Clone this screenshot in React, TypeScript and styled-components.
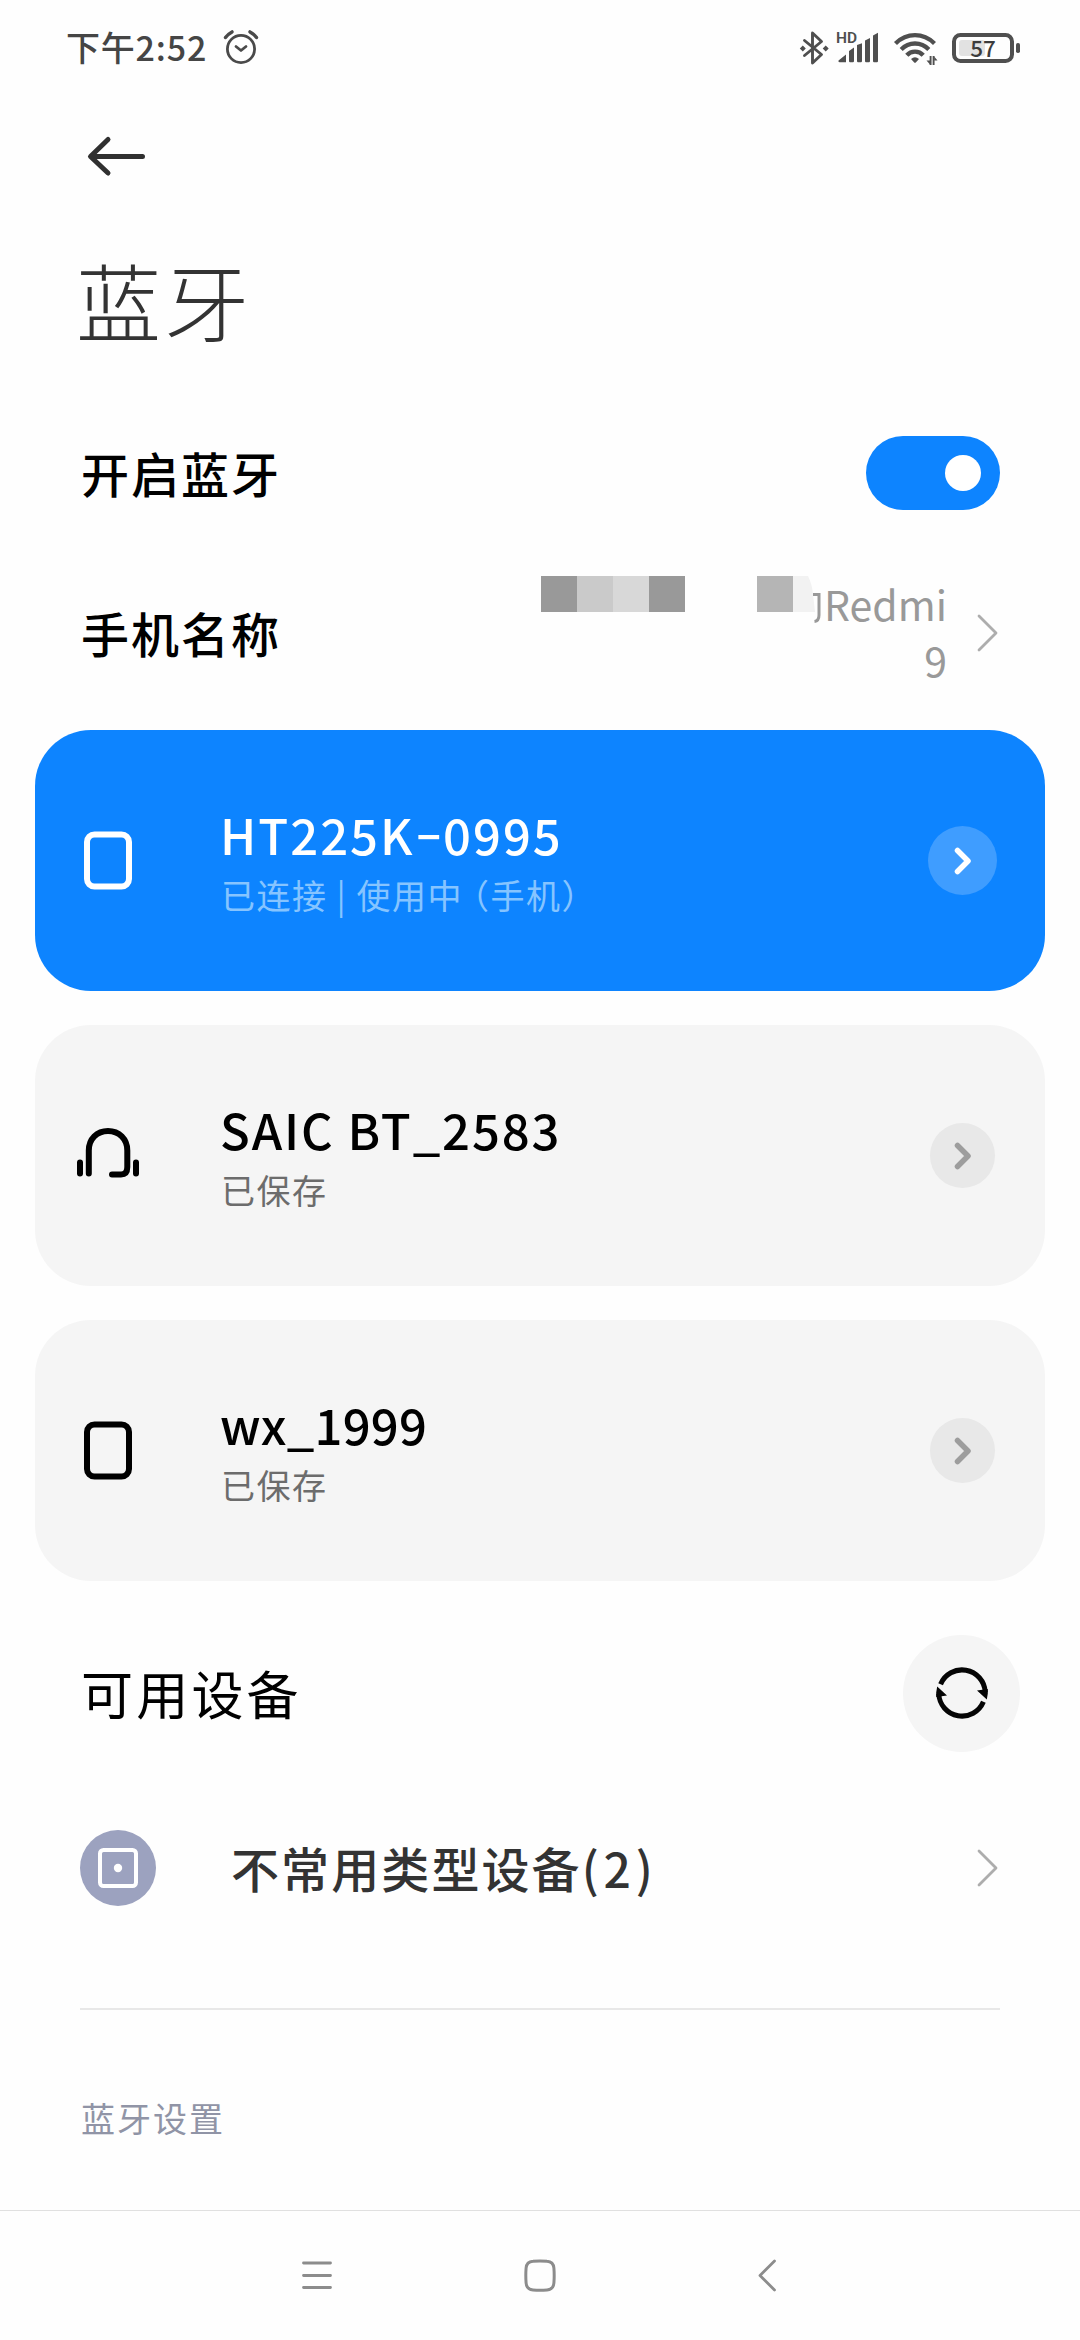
import React from 'react';
import styled, { createGlobalStyle } from 'styled-components';

const GlobalStyle = createGlobalStyle`
  * { box-sizing: border-box; }
  body {
    margin: 0;
    background: #fefefe;
    font-family: "Noto Sans CJK SC", "Noto Sans", sans-serif;
    color: #000;
  }
  svg { display: block; flex: none; }
`;

const Screen = styled.div`
  display: flex;
  flex-direction: column;
  width: 1080px;
  height: 2340px;
  overflow: hidden;
  background: #fefefe;
`;

const StatusBar = styled.header`
  display: flex;
  align-items: center;
  justify-content: space-between;
  height: 96px;
  padding: 0 59px 0 66px;
`;

const StatusLeft = styled.div`
  display: flex;
  align-items: center;
  gap: 15px;
`;

const Clock = styled.span`
  font-size: 34px;
  line-height: 48px;
  height: 50px;
  font-weight: 500;
  color: #454545;
  letter-spacing: 0.8px;
  white-space: nowrap;
`;

const Toolbar = styled.nav`
  display: flex;
  align-items: center;
  height: 120px;
  padding-left: 85px;
`;

const Title = styled.h1`
  margin: 0;
  height: 179px;
  padding: 23px 0 0 76px;
  font-size: 85px;
  line-height: 120px;
  font-weight: 300;
  letter-spacing: 3px;
  color: #333;
`;

const SettingRow = styled.div<{ $height: number; $end: number }>`
  display: flex;
  align-items: center;
  justify-content: space-between;
  height: ${(p) => p.$height}px;
  padding: 0 ${(p) => p.$end}px 0 81px;
`;

const RowLabel = styled.span`
  font-size: 48px;
  line-height: 64px;
  padding-bottom: 3px;
  font-weight: 500;
  letter-spacing: 2px;
`;

const Toggle = styled.button`
  display: flex;
  align-items: center;
  justify-content: flex-end;
  width: 134px;
  height: 74px;
  padding: 0 19px 0 0;
  border: 0;
  border-radius: 37px;
  background: #0d84ff;
`;

const Knob = styled.span`
  width: 36px;
  height: 36px;
  border-radius: 50%;
  background: #fff;
`;

const NameValue = styled.div`
  display: flex;
  align-items: center;
  gap: 29px;
`;

const NameLines = styled.div`
  display: flex;
  flex-direction: column;
  align-items: flex-end;
  padding-bottom: 4px;
  font-size: 41px;
  line-height: 56px;
  font-weight: 400;
  color: #999;
`;

const NameLine = styled.div`
  display: flex;
  height: 56px;
`;

const Mosaic = styled.div`
  display: flex;
  height: 36px;
  margin: 1px 72px 0 0;
`;

const Tile = styled.span<{ $tone: string; $top?: number }>`
  width: 36px;
  height: 36px;
  margin-top: ${(p) => p.$top ?? 0}px;
  background: ${(p) => p.$tone};
`;

const CardList = styled.section`
  display: flex;
  flex-direction: column;
  gap: 34px;
  padding: 15px 35px 0;
`;

const Card = styled.article<{ $active?: boolean }>`
  display: flex;
  align-items: center;
  height: 261px;
  padding: 0 48px 0 36px;
  border-radius: 56px;
  background: ${(p) => (p.$active ? '#0d84ff' : '#f5f5f5')};
  color: ${(p) => (p.$active ? '#fff' : '#000')};
`;

const CardText = styled.div`
  flex: 1;
  display: flex;
  flex-direction: column;
  gap: 6px;
  margin-top: 2px;
  padding-left: 77px;
`;

const DeviceName = styled.div<{ $spacing: number }>`
  font-size: 49px;
  line-height: 60px;
  font-weight: 500;
  letter-spacing: ${(p) => p.$spacing}px;
  white-space: pre;
`;

const Hyphen = styled.span`
  display: inline-block;
  margin: 0 6px 0 5px;
  letter-spacing: 0;
  transform: translateY(-4px) scaleX(1.6);
`;

const DeviceState = styled.div<{ $active?: boolean }>`
  font-size: 34px;
  line-height: 50px;
  font-weight: 400;
  letter-spacing: 1.5px;
  padding-left: 1px;
  white-space: pre;
  color: ${(p) => (p.$active ? '#86c4ff' : '#6c6c6c')};
`;

const Bracketed = styled.span`
  margin-left: -8px;
`;

const ArrowSlot = styled.div`
  display: flex;
  justify-content: center;
  width: 69px;
`;

const ArrowButton = styled.button<{ $active?: boolean }>`
  display: flex;
  align-items: center;
  justify-content: center;
  width: ${(p) => (p.$active ? 69 : 65)}px;
  height: ${(p) => (p.$active ? 69 : 65)}px;
  padding: 0;
  border: 0;
  border-radius: 50%;
  background: ${(p) => (p.$active ? '#3f9dff' : '#e8e8e8')};
  color: ${(p) => (p.$active ? '#fff' : '#9d9d9d')};
`;

const SectionHeader = styled.div`
  display: flex;
  align-items: center;
  justify-content: space-between;
  height: 224px;
  padding: 0 60px 0 81px;
`;

const SectionTitle = styled.h2`
  margin: 0;
  font-size: 52px;
  line-height: 72px;
  font-weight: 400;
  letter-spacing: 3.2px;
`;

const RefreshButton = styled.button`
  display: flex;
  align-items: center;
  justify-content: center;
  width: 117px;
  height: 117px;
  padding: 0;
  border: 0;
  border-radius: 50%;
  background: #f5f5f5;
`;

const GroupRow = styled.div`
  display: flex;
  align-items: center;
  height: 126px;
  padding: 0 82px 0 80px;
`;

const GroupBadge = styled.div`
  display: flex;
  align-items: center;
  justify-content: center;
  width: 76px;
  height: 76px;
  border-radius: 50%;
  background: #9ca2bf;
`;

const GroupLabel = styled.span`
  flex: 1;
  padding: 0 0 2px 75px;
  font-size: 48px;
  line-height: 64px;
  font-weight: 500;
  letter-spacing: 2.1px;
  color: #333;
`;

const GroupCount = styled.span`
  letter-spacing: 4.8px;
`;

const Divider = styled.hr`
  width: 920px;
  height: 2px;
  margin: 77px 80px 0;
  border: 0;
  background: #e8e8e8;
`;

const GroupCaption = styled.div`
  flex: 1;
  padding: 83px 0 0 81px;
  font-size: 34px;
  line-height: 50px;
  letter-spacing: 2px;
  color: #9094a6;
`;

const NavBar = styled.footer`
  display: flex;
  justify-content: center;
  align-items: center;
  height: 130px;
  border-top: 1px solid #e0e0e0;
`;

const NavButton = styled.button`
  display: flex;
  justify-content: center;
  width: 224px;
  padding: 0;
  border: 0;
  background: none;
`;

const AlarmIcon = () => (
  <svg width="38" height="38" viewBox="222 30 38 38" fill="none" stroke="#4a4a4a" strokeLinecap="round">
    <circle cx="241" cy="50" r="13.6" strokeWidth="2.8" />
    <path d="M225.5 38.5Q228 35 232 32.9M256.500 38.500Q254 35 250 32.900" strokeWidth="3.4" />
    <path d="M236 47.500l5 4 5-4" strokeWidth="2.8" strokeLinejoin="round" />
  </svg>
);

const StatusIcons = () => (
  <svg width="223" height="40" viewBox="798 28 223 40" fill="none" stroke="#4f4f4f">
    <path d="M804.500 40.500L821.500 54.500 812.500 63V33L821.500 41.500 804.500 55.500" strokeWidth="2.900" strokeLinejoin="round" strokeLinecap="round" />
    <path d="M799.800 48.500l3-3 3 3-3 3zM822.700 48.500l3-3 3 3-3 3z" fill="#4f4f4f" stroke="none" />
    <text x="836" y="43" fontFamily="Roboto, sans-serif" fontWeight="600" fontSize="15.500" fill="#4f4f4f" stroke="none">HD</text>
    <path d="M838.500 60.500L846 54.500V62.300H839.500Q838 62 838.500 60.500ZM849 51l5-3.500V61.500l-.8.8h-3.400l-.8-.8ZM857 45l5-1.800V61.500l-.8.8h-3.400l-.8-.8ZM865 40.500l5-2.500V61.500l-.8.8h-3.400l-.8-.8ZM873 35.500l5-2.700V61.500l-.8.8h-3.400l-.8-.8Z" fill="#4f4f4f" stroke="none" />
    <g strokeWidth="4.300">
      <path d="M895.500 43.500Q904 35.200 915 35.200T934.500 43.500" />
      <path d="M901.200 49.500Q907 43.500 915 43.500T928.800 49.500" />
      <path d="M906.800 55.300Q910 51.700 915 51.700T923.200 55.300" />
    </g>
    <path d="M911 59Q915 55.500 919 59L915.800 62.500Q915 63.200 914.200 62.500Z" fill="#4f4f4f" stroke="none" />
    <path d="M930.600 56v9M933.600 65v-9" strokeWidth="1.900" />
    <path d="M926.500 60.500h3.500v4zM934.200 56.500v4h3.300z" fill="#4f4f4f" stroke="none" />
    <rect x="959" y="40" width="26" height="16" rx="3" fill="#e2e2e2" stroke="none" />
    <rect x="954" y="35" width="58" height="26" rx="6.500" strokeWidth="4" />
    <text x="983" y="57" textAnchor="middle" fontFamily="Noto Sans CJK SC, sans-serif" fontWeight="500" fontSize="22.500" fill="#3c3c3c" stroke="none">57</text>
    <rect x="1016" y="43" width="4" height="10" rx="1.800" fill="#4f4f4f" stroke="none" />
  </svg>
);

const BackArrow = () => (
  <svg width="64" height="44" viewBox="85 134 64 44" fill="none" stroke="#303030" strokeWidth="5" strokeLinecap="round" strokeLinejoin="round">
    <path d="M108 139.500L90.500 156.500 108 173M92 156.500H142.500" />
  </svg>
);

const Chevron = () => (
  <svg width="22" height="40" viewBox="0 0 22 40" fill="none" stroke="#adadad" strokeWidth="2.800" strokeLinecap="round" strokeLinejoin="round">
    <path d="M3 3L20 20 3 37" />
  </svg>
);

const SmallChevron = () => (
  <svg width="20" height="30" viewBox="0 0 20 30" fill="none" stroke="currentColor" strokeWidth="5.500" strokeLinecap="round" strokeLinejoin="round">
    <path d="M4.500 4.500L15 15 4.500 25.500" />
  </svg>
);

/* Remainder of a character whose left part is covered by the tiles. */
const ClippedGlyph = () => (
  <svg width="31" height="50" viewBox="0 0 31 50" fill="none">
    <path d="M0 1H15Q19 9 20 19L22 37H0Z" fill="#f2f2f2" />
    <path d="M20 19.500H26V40Q26 46 21.500 46.500" stroke="#999" strokeWidth="3" />
  </svg>
);

const DeviceIcon = () => (
  <svg width="72" height="72" viewBox="0 0 72 72" fill="none" stroke="currentColor" strokeWidth="6">
    <rect x="16" y="9.500" width="42" height="52" rx="7.500" />
  </svg>
);

const HeadsetIcon = () => (
  <svg width="72" height="72" viewBox="0 0 72 72" fill="none" stroke="currentColor" strokeWidth="6" strokeLinecap="round">
    <path d="M9 42.500V53.500M65 42.500V53.500" />
    <path d="M17.800 53.500V30.500C17.800 19 26 11 37 11S56.300 19 56.300 30.500V47Q56.300 54.500 50 54.500H41" />
  </svg>
);

const RefreshIcon = () => (
  <svg width="56" height="56" viewBox="-28 -28 56 56" fill="none" stroke="#050505" strokeWidth="5">
    <path d="M-21.400 -8.800A23.200 23.200 0 0 1 23.200 -1" />
    <path d="M21.400 8.800A23.200 23.200 0 0 1 -23.200 1" />
    <path d="M15 -2.500L25.800 -4V0.500L24.800 6.500ZM-15 2.500L-25.800 4V-0.500L-24.800 -6.500Z" fill="#050505" stroke="none" />
  </svg>
);

const OtherDeviceIcon = () => (
  <svg width="40" height="40" viewBox="0 0 40 40" fill="none" stroke="#fff" strokeWidth="4">
    <rect x="2" y="2" width="36" height="36" rx="3.500" />
    <circle cx="20" cy="20" r="4.200" fill="#fff" stroke="none" />
  </svg>
);

type Device = {
  id: string;
  name: React.ReactNode;
  spacing: number;
  kind: 'device' | 'headset';
  active?: boolean;
  state: React.ReactNode;
};

const devices: Device[] = [
  {
    id: 'ht',
    name: <>HT225K<Hyphen>-</Hyphen>0995</>,
    spacing: 2,
    kind: 'device',
    active: true,
    state: <>已连接 | 使用中<Bracketed>（手机）</Bracketed></>,
  },
  { id: 'saic', name: 'SAIC BT_2583', spacing: 1.9, kind: 'headset', state: '已保存' },
  { id: 'wx', name: 'wx_1999', spacing: 0.2, kind: 'device', state: '已保存' },
];

export default function App() {
  return (
    <>
      <GlobalStyle />
      <Screen>
        <StatusBar>
          <StatusLeft>
            <Clock>下午2:52</Clock>
            <AlarmIcon />
          </StatusLeft>
          <StatusIcons />
        </StatusBar>
        <Toolbar><BackArrow /></Toolbar>
        <Title>蓝牙</Title>
        <SettingRow $height={156} $end={80}>
          <RowLabel>开启蓝牙</RowLabel>
          <Toggle role="switch" aria-checked="true"><Knob /></Toggle>
        </SettingRow>
        <SettingRow $height={164} $end={82}>
          <RowLabel>手机名称</RowLabel>
          <NameValue>
            <NameLines>
              <NameLine>
                <Mosaic>
                  {['#999', '#cacaca', '#d8d8d8', '#999'].map((tone, i) => <Tile key={i} $tone={tone} />)}
                </Mosaic>
                <Tile $tone="#b5b5b5" $top={1} />
                <ClippedGlyph />
                <span>Redmi</span>
              </NameLine>
              <NameLine>9</NameLine>
            </NameLines>
            <Chevron />
          </NameValue>
        </SettingRow>
        <CardList>
          {devices.map((d) => (
            <Card key={d.id} $active={d.active}>
              {d.kind === 'headset' ? <HeadsetIcon /> : <DeviceIcon />}
              <CardText>
                <DeviceName $spacing={d.spacing}>{d.name}</DeviceName>
                <DeviceState $active={d.active}>{d.state}</DeviceState>
              </CardText>
              <ArrowSlot>
                <ArrowButton $active={d.active}><SmallChevron /></ArrowButton>
              </ArrowSlot>
            </Card>
          ))}
        </CardList>
        <SectionHeader>
          <SectionTitle>可用设备</SectionTitle>
          <RefreshButton><RefreshIcon /></RefreshButton>
        </SectionHeader>
        <GroupRow>
          <GroupBadge><OtherDeviceIcon /></GroupBadge>
          <GroupLabel>不常用类型设备<GroupCount>(2)</GroupCount></GroupLabel>
          <Chevron />
        </GroupRow>
        <Divider />
        <GroupCaption>蓝牙设置</GroupCaption>
        <NavBar>
          <NavButton>
            <svg width="60" height="40" viewBox="0 0 60 40" fill="none" stroke="#8c8c8c" strokeWidth="2.800" strokeLinecap="round">
              <path d="M17.500 7H44.500M17.500 19.500H44.500M17.500 31.500H44.500" />
            </svg>
          </NavButton>
          <NavButton>
            <svg width="60" height="40" viewBox="0 0 60 40" fill="none" stroke="#8c8c8c" strokeWidth="3">
              <path d="M23 5.200Q30 4.600 37 5.200Q43.400 5.600 43.900 12Q44.500 19.500 43.900 27Q43.400 33.400 37 33.900Q30 34.500 23 33.900Q16.600 33.400 16.100 27Q15.500 19.500 16.100 12Q16.600 5.600 23 5.200Z" />
            </svg>
          </NavButton>
          <NavButton>
            <svg width="60" height="40" viewBox="0 0 60 40" fill="none" stroke="#8c8c8c" strokeWidth="2.800" strokeLinecap="round" strokeLinejoin="round">
              <path d="M40.500 5L26 19.500 40.500 34" />
            </svg>
          </NavButton>
        </NavBar>
      </Screen>
    </>
  );
}
